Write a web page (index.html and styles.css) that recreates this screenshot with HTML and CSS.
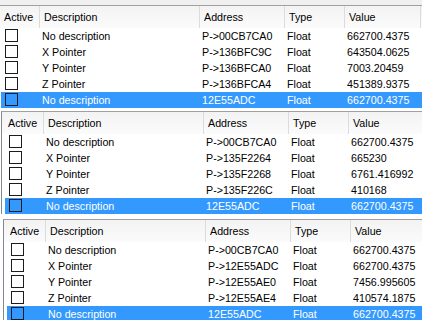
FILE: index.html
```html
<!DOCTYPE html>
<html lang="en">
<head>
<meta charset="UTF-8">
<title>Address list</title>
<link rel="stylesheet" href="styles.css">
</head>
<body>

<div class="topbar"></div>

<div class="list list-1">
    <div class="head">
        <div class="hcell c-active">Active</div>
        <div class="hcell">Description</div>
        <div class="hcell">Address</div>
        <div class="hcell">Type</div>
        <div class="hcell">Value</div>
    </div>
    <div class="row"><div class="cell"><span class="check"></span></div><div class="cell">No description</div><div class="cell">P-&gt;00CB7CA0</div><div class="cell">Float</div><div class="cell">662700.4375</div></div>
    <div class="row"><div class="cell"><span class="check"></span></div><div class="cell">X Pointer</div><div class="cell">P-&gt;136BFC9C</div><div class="cell">Float</div><div class="cell">643504.0625</div></div>
    <div class="row"><div class="cell"><span class="check"></span></div><div class="cell">Y Pointer</div><div class="cell">P-&gt;136BFCA0</div><div class="cell">Float</div><div class="cell">7003.20459</div></div>
    <div class="row"><div class="cell"><span class="check"></span></div><div class="cell">Z Pointer</div><div class="cell">P-&gt;136BFCA4</div><div class="cell">Float</div><div class="cell">451389.9375</div></div>
    <div class="row selected"><div class="cell"><span class="check"></span></div><div class="cell">No description</div><div class="cell">12E55ADC</div><div class="cell">Float</div><div class="cell">662700.4375</div></div>
</div>

<div class="list list-2">
    <div class="head">
        <div class="hcell c-active">Active</div>
        <div class="hcell">Description</div>
        <div class="hcell">Address</div>
        <div class="hcell">Type</div>
        <div class="hcell">Value</div>
    </div>
    <div class="row"><div class="cell"><span class="check"></span></div><div class="cell">No description</div><div class="cell">P-&gt;00CB7CA0</div><div class="cell">Float</div><div class="cell">662700.4375</div></div>
    <div class="row"><div class="cell"><span class="check"></span></div><div class="cell">X Pointer</div><div class="cell">P-&gt;135F2264</div><div class="cell">Float</div><div class="cell">665230</div></div>
    <div class="row"><div class="cell"><span class="check"></span></div><div class="cell">Y Pointer</div><div class="cell">P-&gt;135F2268</div><div class="cell">Float</div><div class="cell">6761.416992</div></div>
    <div class="row"><div class="cell"><span class="check"></span></div><div class="cell">Z Pointer</div><div class="cell">P-&gt;135F226C</div><div class="cell">Float</div><div class="cell">410168</div></div>
    <div class="row selected"><div class="cell"><span class="check"></span></div><div class="cell">No description</div><div class="cell">12E55ADC</div><div class="cell">Float</div><div class="cell">662700.4375</div></div>
</div>

<div class="list list-3">
    <div class="head">
        <div class="hcell c-active">Active</div>
        <div class="hcell">Description</div>
        <div class="hcell">Address</div>
        <div class="hcell">Type</div>
        <div class="hcell">Value</div>
    </div>
    <div class="row"><div class="cell"><span class="check"></span></div><div class="cell">No description</div><div class="cell">P-&gt;00CB7CA0</div><div class="cell">Float</div><div class="cell">662700.4375</div></div>
    <div class="row"><div class="cell"><span class="check"></span></div><div class="cell">X Pointer</div><div class="cell">P-&gt;12E55ADC</div><div class="cell">Float</div><div class="cell">662700.4375</div></div>
    <div class="row"><div class="cell"><span class="check"></span></div><div class="cell">Y Pointer</div><div class="cell">P-&gt;12E55AE0</div><div class="cell">Float</div><div class="cell">7456.995605</div></div>
    <div class="row"><div class="cell"><span class="check"></span></div><div class="cell">Z Pointer</div><div class="cell">P-&gt;12E55AE4</div><div class="cell">Float</div><div class="cell">410574.1875</div></div>
    <div class="row selected"><div class="cell"><span class="check"></span></div><div class="cell">No description</div><div class="cell">12E55ADC</div><div class="cell">Float</div><div class="cell">662700.4375</div></div>
</div>

</body>
</html>
```

FILE: styles.css
```css
body {
    margin: 0;
    width: 422px;
    height: 320px;
    overflow: hidden;
    background-color: #fff;
    color: #000;
    font-family: "Liberation Sans", Arial, sans-serif;
    font-size: 10.7px;
}
.topbar {
    height: 5px;
    background-color: #f0f0f0;
}
.list {
    border-top: 1px solid #a0a0a0;
    border-left: 1px solid #828790;
    background-color: #fff;
    width: 430px;
}
.list-1 {
    margin-left: -3px;
}
.list-2 {
    margin-left: 1px;
    margin-top: 3px;
}
.list-3 {
    margin-left: 3px;
    margin-top: 5px;
}
.head {
    display: grid;
    grid-template-columns: 42px 160px 85px 60px 76px;
    height: 22px;
    background: linear-gradient(#f3f3f3, #fbfbfb);
}
.hcell {
    line-height: 22px;
    padding-left: 4px;
    border-right: 1px solid #dcdcdc;
    white-space: nowrap;
    overflow: hidden;
}
.hcell.c-active {
    padding-left: 6px;
}
.row {
    display: grid;
    grid-template-columns: 39px 160px 85px 60px 86px;
    height: 16px;
    line-height: 16px;
    margin-left: 3px;
}
.cell {
    padding-left: 2px;
    white-space: nowrap;
    overflow: hidden;
}
.check {
    display: block;
    width: 11px;
    height: 11px;
    margin: 1px 0 0 2px;
    border: 1px solid #1c1c1c;
    background-color: #fff;
}
.row.selected {
    background-color: #3399ff;
    color: #fff;
}
.row.selected .check {
    background-color: transparent;
}
```
